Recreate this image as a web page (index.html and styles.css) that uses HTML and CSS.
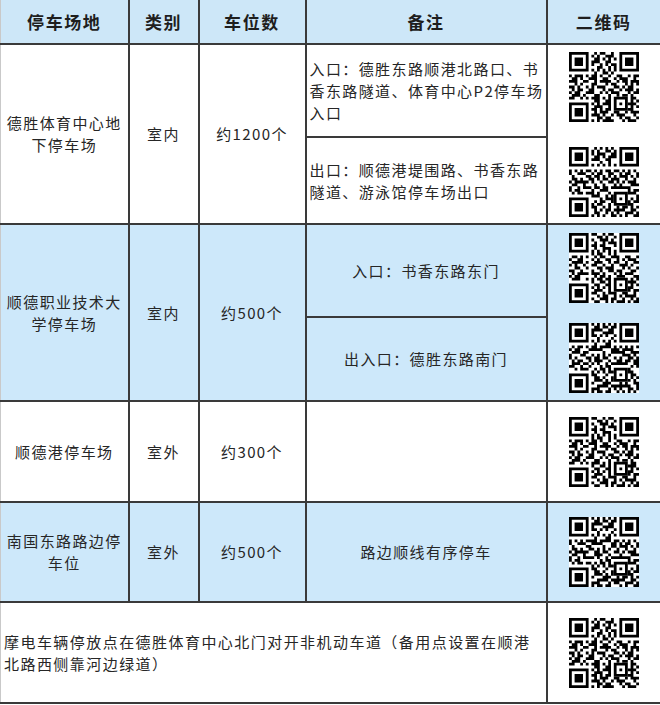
FILE: index.html
```html
<!DOCTYPE html>
<html lang="zh-CN">
<head>
<meta charset="utf-8">
<title>停车场信息</title>
<link rel="stylesheet" href="styles.css">
</head>
<body>
<table class="park">
  <colgroup>
    <col class="c1"><col class="c2"><col class="c3"><col class="c4"><col class="c5">
  </colgroup>
  <thead>
    <tr class="head">
      <th class="edge">停车场地</th><th>类别</th><th>车位数</th><th>备注</th><th class="redge">二维码</th>
    </tr>
  </thead>
  <tbody>
    <tr class="r1a">
      <td rowspan="2" class="edge">德胜体育中心地下停车场</td>
      <td rowspan="2">室内</td>
      <td rowspan="2">约1200个</td>
      <td class="note">入口：德胜东路顺港北路口、书<br>香东路隧道、体育中心P2停车场<br>入口</td>
      <td rowspan="2" class="qrcell redge">
        <div class="qrs g1">
          <svg class="qr" viewBox="0 0 25 25">
            <defs>
              <path id="fnd" fill-rule="evenodd" d="M0 0h7v7H0zM1 1v5h5V1zM2 2h3v3H2zM18 0h7v7h-7zM19 1v5h5V1zM20 2h3v3h-3zM0 18h7v7H0zM1 19v5h5v-5zM2 20h3v3H2zM16 16h5v5h-5zM17 17v3h3v-3zM18 18h1v1h-1z"/>
              <path id="dA" fill="none" stroke="#000" stroke-width="1" d="M9 .5h1m1 0h2m2 0h1M8 1.5h1m1 0h1m2 0h3M9 2.5h2m1 0h1m1 0h1m1 0h1M8 3.5h3m2 0h2M8 4.5h1m2 0h1m1 0h1m1 0h2M10 5.5h2m2 0h1m1 0h1M8 6.5h1m1 0h1m1 0h1m1 0h1m1 0h1M9 7.5h1m2 0h2m1 0h1M0 8.5h1m1 0h3m1 0h1m1 0h2m1 0h1m2 0h1m2 0h2m2 0h1m1 0h2M1 9.5h2m1 0h1m2 0h3m2 0h2m2 0h1m1 0h3m2 0h1M0 10.5h3m2 0h2m2 0h1m1 0h4m2 0h1m1 0h2m1 0h3M2 11.5h1m1 0h1m3 0h2m3 0h1m1 0h2m3 0h1m1 0h1m1 0h1M0 12.5h2m1 0h1m2 0h1m1 0h1m1 0h3m3 0h2m1 0h1m1 0h2M1 13.5h1m1 0h2m2 0h2m3 0h1m1 0h2m2 0h1m1 0h3m1 0h1M0 14.5h1m1 0h2m2 0h3m2 0h1m1 0h1m1 0h3m3 0h1m1 0h2M1 15.5h3m1 0h1m3 0h2m3 0h1m2 0h1m1 0h2m1 0h1M0 16.5h2m2 0h1m1 0h1m1 0h3m1 0h1m1 0h1m7 0h2M9 17.5h2m2 0h2m7 0h1m1 0h1M8 18.5h1m1 0h1m1 0h3m6 0h3M9 19.5h3m2 0h1m7 0h1m1 0h1M8 20.5h2m1 0h1m1 0h2m6 0h2M9 21.5h1m1 0h3m2 0h2m2 0h1m1 0h3M8 22.5h3m1 0h1m2 0h1m1 0h3m3 0h1M10 23.5h2m1 0h2m3 0h1m1 0h2m2 0h1M8 24.5h1m1 0h1m1 0h4m3 0h1m1 0h3"/>
              <path id="dB" fill="none" stroke="#000" stroke-width="1" d="M8 .5h2m2 0h1m1 0h2M10 1.5h2m1 0h1m2 0h1M8 2.5h1m2 0h3m1 0h1M9 3.5h1m2 0h1m1 0h3M8 4.5h2m1 0h2m3 0h1M9 5.5h1m2 0h3M8 6.5h1m1 0h1m1 0h1m1 0h1m1 0h1M8 7.5h1m1 0h2m2 0h1m1 0h1M1 8.5h2m1 0h1m1 0h1m2 0h1m1 0h2m2 0h3m2 0h2m2 0h1M0 9.5h1m2 0h2m3 0h1m1 0h1m2 0h2m2 0h1m1 0h1m1 0h3M1 10.5h4m1 0h1m2 0h3m2 0h1m1 0h2m2 0h1m2 0h2M0 11.5h1m1 0h1m2 0h1m2 0h2m2 0h1m2 0h1m2 0h3m1 0h1M2 12.5h2m2 0h1m3 0h2m1 0h3m3 0h1m1 0h1m2 0h1M0 13.5h2m2 0h1m3 0h1m2 0h1m2 0h2m1 0h2m3 0h2M1 14.5h1m1 0h4m1 0h3m1 0h1m3 0h1m1 0h1m1 0h3M0 15.5h1m1 0h2m5 0h1m1 0h2m1 0h1m2 0h3m3 0h2M1 16.5h3m2 0h1m1 0h1m1 0h2m1 0h2m7 0h1m1 0h1M8 17.5h1m2 0h2m1 0h1m6 0h3M9 18.5h2m2 0h2m7 0h1m1 0h1M8 19.5h1m1 0h1m1 0h1m1 0h1m6 0h2M9 20.5h3m2 0h1m6 0h1m1 0h2M8 21.5h2m2 0h1m1 0h3m2 0h2m2 0h1M10 22.5h1m1 0h2m2 0h1m1 0h1m1 0h4M8 23.5h1m2 0h3m1 0h2m2 0h1m2 0h1m1 0h1M9 24.5h2m2 0h1m1 0h1m1 0h3m1 0h1m1 0h2"/>
              <path id="dC" fill="none" stroke="#000" stroke-width="1" d="M8 .5h2m2 0h1m1 0h2M10 1.5h2m1 0h1m2 0h1M8 2.5h1m2 0h3m1 0h1M9 3.5h1m2 0h1m1 0h3M8 4.5h2m1 0h2m3 0h1M9 5.5h1m2 0h3M8 6.5h1m1 0h1m1 0h1m1 0h1m1 0h1M8 7.5h1m1 0h2m2 0h1m1 0h1M0 8.5h1m1 0h3m1 0h1m1 0h2m1 0h1m2 0h1m2 0h2m2 0h1m1 0h2M1 9.5h2m1 0h1m2 0h3m2 0h2m2 0h1m1 0h3m2 0h1M0 10.5h3m2 0h2m2 0h1m1 0h4m2 0h1m1 0h2m1 0h3M2 11.5h1m1 0h1m3 0h2m3 0h1m1 0h2m3 0h1m1 0h1m1 0h1M0 12.5h2m1 0h1m2 0h1m1 0h1m1 0h3m3 0h2m1 0h1m1 0h2M1 13.5h1m1 0h2m2 0h2m3 0h1m1 0h2m2 0h1m1 0h3m1 0h1M0 14.5h1m1 0h2m2 0h3m2 0h1m1 0h1m1 0h3m3 0h1m1 0h2M1 15.5h3m1 0h1m3 0h2m3 0h1m2 0h1m1 0h2m1 0h1M0 16.5h2m2 0h1m1 0h1m1 0h3m1 0h1m1 0h1m7 0h2M8 17.5h1m2 0h2m1 0h1m6 0h3M9 18.5h2m2 0h2m7 0h1m1 0h1M8 19.5h1m1 0h1m1 0h1m1 0h1m6 0h2M9 20.5h3m2 0h1m6 0h1m1 0h2M8 21.5h2m2 0h1m1 0h3m2 0h2m2 0h1M10 22.5h1m1 0h2m2 0h1m1 0h1m1 0h4M8 23.5h1m2 0h3m1 0h2m2 0h1m2 0h1m1 0h1M9 24.5h2m2 0h1m1 0h1m1 0h3m1 0h1m1 0h2"/>
            </defs>
            <rect class="qrbg" width="25" height="25"/>
            <use href="#fnd"/><use href="#dA"/>
          </svg>
          <svg class="qr" viewBox="0 0 25 25">
            <rect class="qrbg" width="25" height="25"/>
            <use href="#fnd"/><use href="#dB" transform="matrix(0 1 1 0 0 0)"/>
          </svg>
        </div>
      </td>
    </tr>
    <tr class="r1b">
      <td class="note">出口：顺德港堤围路、书香东路<br>隧道、游泳馆停车场出口</td>
    </tr>
    <tr class="r2a blue">
      <td rowspan="2" class="edge">顺德职业技术大学停车场</td>
      <td rowspan="2">室内</td>
      <td rowspan="2">约500个</td>
      <td class="center">入口：书香东路东门</td>
      <td rowspan="2" class="qrcell redge">
        <div class="qrs g2">
          <svg class="qr" viewBox="0 0 25 25">
            <rect class="qrbg" width="25" height="25"/>
            <use href="#fnd"/><use href="#dB"/>
          </svg>
          <svg class="qr" viewBox="0 0 25 25">
            <rect class="qrbg" width="25" height="25"/>
            <use href="#fnd"/><use href="#dA" transform="matrix(0 1 1 0 0 0)"/>
          </svg>
        </div>
      </td>
    </tr>
    <tr class="r2b blue">
      <td class="center">出入口：德胜东路南门</td>
    </tr>
    <tr class="r3">
      <td class="edge">顺德港停车场</td>
      <td>室外</td>
      <td>约300个</td>
      <td></td>
      <td class="qrcell redge">
        <div class="qrs">
          <svg class="qr" viewBox="0 0 25 25">
            <rect class="qrbg" width="25" height="25"/>
            <use href="#fnd"/><use href="#dC"/>
          </svg>
        </div>
      </td>
    </tr>
    <tr class="r4 blue">
      <td class="edge">南国东路路边停车位</td>
      <td>室外</td>
      <td>约500个</td>
      <td>路边顺线有序停车</td>
      <td class="qrcell redge">
        <div class="qrs">
          <svg class="qr" viewBox="0 0 25 25">
            <rect class="qrbg" width="25" height="25"/>
            <use href="#fnd"/><use href="#dC" transform="matrix(0 1 1 0 0 0)"/>
          </svg>
        </div>
      </td>
    </tr>
    <tr class="r5">
      <td colspan="4" class="edge foot">摩电车辆停放点在德胜体育中心北门对开非机动车道（备用点设置在顺港<br>北路西侧靠河边绿道）</td>
      <td class="qrcell redge">
        <div class="qrs">
          <svg class="qr" viewBox="0 0 25 25">
            <rect class="qrbg" width="25" height="25"/>
            <use href="#fnd"/><use href="#dA"/>
          </svg>
        </div>
      </td>
    </tr>
  </tbody>
</table>
</body>
</html>
```

FILE: styles.css
```css
html, body {
  margin: 0;
  padding: 0;
  background: #ffffff;
}

body {
  font-family: "Noto Sans CJK SC", "Noto Sans", sans-serif;
  color: #262626;
  text-spacing-trim: space-all;
}

.park {
  border-collapse: collapse;
  table-layout: fixed;
  width: 660px;
}

.c1 { width: 128px; }
.c2 { width: 70px; }
.c3 { width: 107px; }
.c4 { width: 241px; }
.c5 { width: 114px; }

.park th,
.park td {
  border: 2px solid #3a3a3a;
  padding: 0 3px;
  text-align: center;
  vertical-align: middle;
  font-size: 15px;
  font-weight: 400;
  letter-spacing: 1.4px;
  line-height: 22px;
  white-space: nowrap;
}

.park td.edge { white-space: normal; }

.park th {
  font-size: 17px;
  font-weight: 700;
  letter-spacing: 1.6px;
  color: #1e1e1e;
  background: #cde7f8;
  border-top: none;
}

.park .edge { border-left: 1px solid #c9c9c9; }
.park .redge { border-right: 1px solid #c9c9c9; }

.head { height: 44px; }
.r1a { height: 93px; }
.r1b { height: 87px; }
.r2a { height: 93px; }
.r2b { height: 84px; }
.r3 { height: 101px; }
.r4 { height: 100px; }
.r5 { height: 101px; }

.blue td { background: #cde8fa; }

.park td.note {
  text-align: left;
  padding-left: 3px;
  padding-right: 0;
}

.park td.foot {
  text-align: left;
  padding-left: 3px;
  letter-spacing: 1.45px;
}

.qrcell { padding: 0; }

.qrs {
  display: flex;
  flex-direction: column;
  align-items: center;
  justify-content: center;
}

.qrs.g1 { gap: 25px; }
.qrs.g2 { gap: 20px; }

.qr {
  display: block;
  width: 70px;
  height: 70px;
}

.qrbg { fill: #ffffff; }
```
